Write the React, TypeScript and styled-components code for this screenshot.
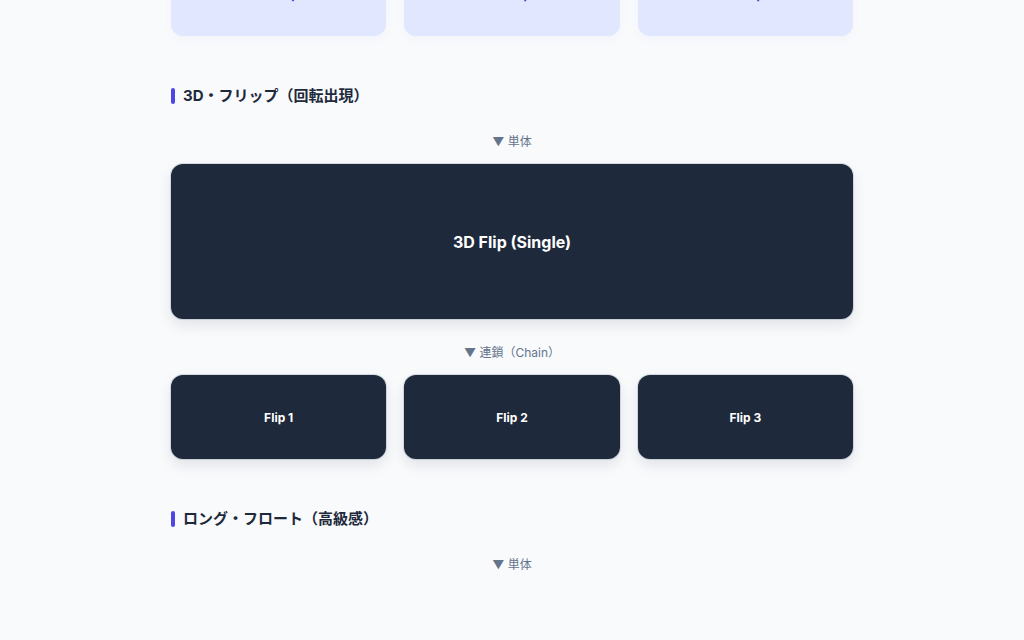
import styled, { createGlobalStyle } from 'styled-components';

const GlobalStyle = createGlobalStyle`
    html, body {
        margin: 0;
        padding: 0;
        background: #f8fafc;
        font-family: "Inter", "Noto Sans CJK JP", sans-serif;
        color: #1e293b;
        overflow: hidden;
    }
`;

const Page = styled.main`
    width: 682px;
    margin: -48px auto 0;
`;

const Section = styled.section`
    margin-bottom: 52px;
`;

const SectionTitle = styled.h2`
    margin: 0;
    height: 16px;
    display: flex;
    align-items: center;
    gap: 8px;
    font-size: 15px;
    font-weight: 700;
    line-height: 16px;
    color: #1e293b;

    &::before {
        content: '';
        width: 4px;
        height: 16px;
        border-radius: 2px;
        background: #4f46e5;
    }
`;

const Caption = styled.div`
    margin: 29px 0 13px;
    height: 18px;
    line-height: 18px;
    text-align: center;
    font-size: 12px;
    color: #64748b;
`;

const ChainCaption = styled(Caption)`
    margin-top: 25px;
`;

const Grid = styled.div`
    display: grid;
    grid-template-columns: repeat(3, 1fr);
    gap: 18px;
`;

const Card = styled.div<{ $tone: 'dark' | 'light'; $big?: boolean }>`
    height: ${p => (p.$big ? 155 : 84)}px;
    border-radius: 12px;
    display: flex;
    align-items: center;
    justify-content: center;
    font-weight: 700;
    font-size: ${p => (p.$big ? 16 : 12)}px;
    background: ${p => (p.$tone === 'dark' ? '#1e293b' : '#e0e7ff')};
    color: ${p => (p.$tone === 'dark' ? '#ffffff' : '#4338ca')};
    box-shadow: ${p =>
        p.$tone === 'dark'
            ? '0 0 0 1px rgba(148,163,184,0.35), 0 6px 14px rgba(15,23,42,0.10)'
            : '0 4px 10px rgba(99,102,241,0.04)'};
`;

const App = () => {
    return (
        <>
            <GlobalStyle />
            <Page>
                <Section>
                    <Grid>
                        <Card $tone="light">Float Up 1</Card>
                        <Card $tone="light">Float Up 2</Card>
                        <Card $tone="light">Float Up 3</Card>
                    </Grid>
                </Section>

                <Section>
                    <SectionTitle>3D・フリップ（回転出現）</SectionTitle>
                    <Caption>▼ 単体</Caption>
                    <Card $tone="dark" $big>3D Flip (Single)</Card>
                    <ChainCaption>▼ 連鎖（Chain）</ChainCaption>
                    <Grid>
                        <Card $tone="dark">Flip 1</Card>
                        <Card $tone="dark">Flip 2</Card>
                        <Card $tone="dark">Flip 3</Card>
                    </Grid>
                </Section>

                <Section>
                    <SectionTitle>ロング・フロート（高級感）</SectionTitle>
                    <Caption>▼ 単体</Caption>
                </Section>
            </Page>
        </>
    );
};

export default App;
